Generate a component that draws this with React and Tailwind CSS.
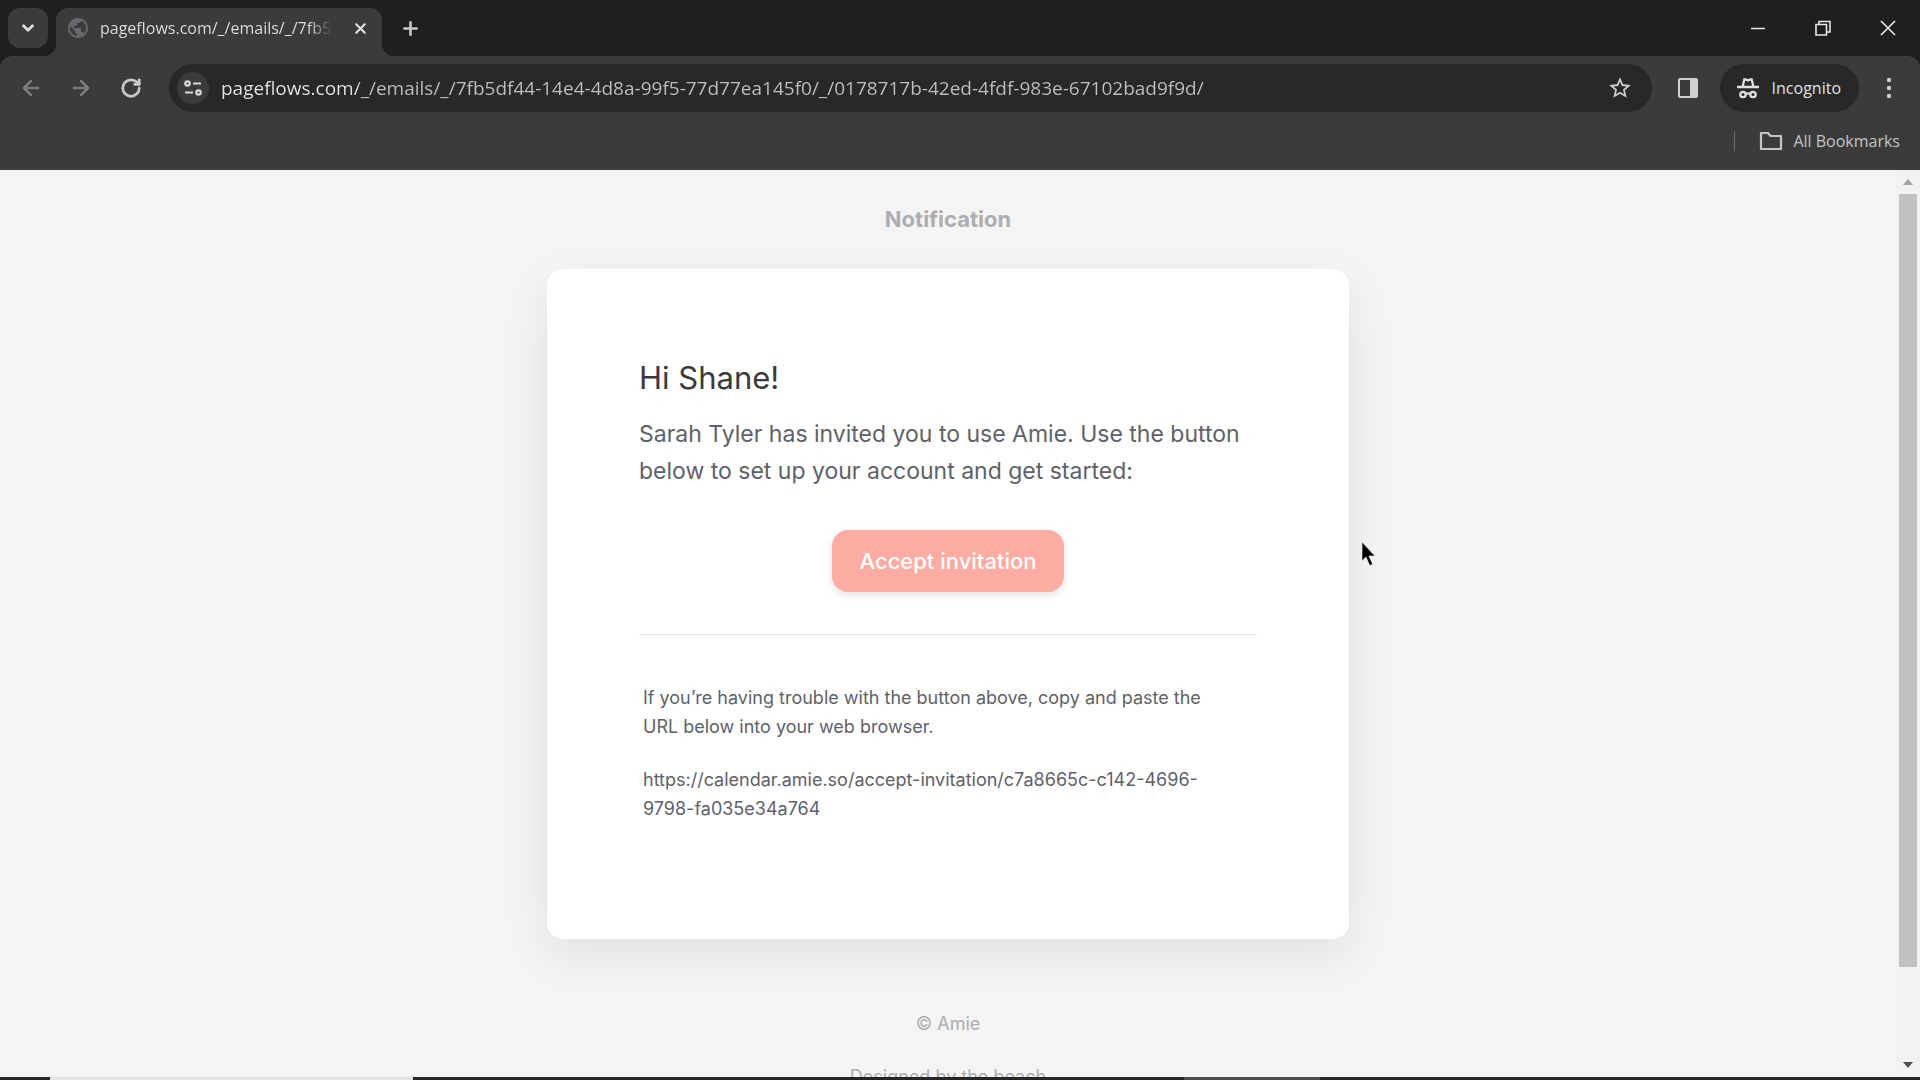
import { useState } from 'react';
import { ArrowLeft, ArrowRight, ChevronDown, Plus, RotateCw, X } from 'lucide-react';
import { MdPublic, MdStarBorder } from 'react-icons/md';

const PAGE_URL = 'pageflows.com/_/emails/_/7fb5df44-14e4-4d8a-99f5-77d77ea145f0/_/0178717b-42ed-4fdf-983e-67102bad9f9d/';
const INVITE_URL = 'https://calendar.amie.so/accept-invitation/c7a8665c-c142-4696-9798-fa035e34a764';

function TabStrip() {
  return (
    <div className="flex h-14 shrink-0 items-end bg-[#1f1f1f] pl-2">
      <button aria-label="Search tabs" className="mb-2 flex size-10 items-center justify-center rounded-xl bg-[#3b3b3b] text-[#e0e0e0]">
        <ChevronDown size={18} strokeWidth={3.5} />
      </button>
      <div className="relative ml-2 flex h-12 w-[326px] items-center rounded-t-xl bg-[#3b3b3b] pr-2 pl-[10px] text-[#e0e0e0]">
        <svg className="absolute bottom-0 -left-3" width="12" height="12" viewBox="0 0 12 12" fill="#3b3b3b"><path d="M12 0v12H0A12 12 0 0 0 12 0z" /></svg>
        <svg className="absolute -right-3 bottom-0" width="12" height="12" viewBox="0 0 12 12" fill="#3b3b3b"><path d="M0 0v12h12A12 12 0 0 1 0 0z" /></svg>
        <MdPublic size={24} className="mb-2 shrink-0 text-[#66686c]" />
        <span className="mb-2 ml-[10px] w-[232px] overflow-hidden bg-linear-to-r from-[#e0e0e0] from-90% to-transparent bg-clip-text text-base whitespace-nowrap text-transparent">
          {PAGE_URL}
        </span>
        <button aria-label="Close tab" className="mb-2 ml-4 flex size-6 items-center justify-center">
          <X size={17} strokeWidth={3} />
        </button>
      </div>
      <button aria-label="New tab" className="mb-4 ml-4 flex size-6 items-center justify-center text-[#c8c8c8]">
        <Plus size={21} strokeWidth={3} />
      </button>
      <div className="ml-auto flex h-14 items-center text-[#e8e8e8]">
        <button aria-label="Minimize" className="flex h-full w-[65px] items-center justify-center">
          <svg width="16" height="16" viewBox="0 0 16 16" stroke="currentColor" strokeWidth="1.5"><path d="M1 8.5h14" /></svg>
        </button>
        <button aria-label="Restore" className="flex h-full w-[65px] items-center justify-center">
          <svg width="16" height="16" viewBox="0 0 16 16" fill="none" stroke="currentColor" strokeWidth="1.6">
            <path d="M1 4.5h10.500V15H1zM4 4.500V1.500h11V12h-3" />
          </svg>
        </button>
        <button aria-label="Close" className="flex h-full w-[65px] items-center justify-center">
          <svg width="16" height="16" viewBox="0 0 16 16" stroke="currentColor" strokeWidth="1.6"><path d="M1 1l14 14M15 1L1 15" /></svg>
        </button>
      </div>
    </div>
  );
}

function Toolbar() {
  const [url, setUrl] = useState(PAGE_URL);

  return (
    <div className="flex shrink-0 items-center rounded-t-xl bg-[#3b3b3b] px-[15px] pt-2">
      <button aria-label="Back" className="flex size-8 items-center justify-center text-[#7b7b7b]"><ArrowLeft size={24} strokeWidth={2.5} /></button>
      <button aria-label="Forward" className="ml-[18px] flex size-8 items-center justify-center text-[#7b7b7b]"><ArrowRight size={24} strokeWidth={2.5} /></button>
      <button aria-label="Reload" className="ml-[18px] flex size-8 items-center justify-center text-[#c8c8c8]"><RotateCw size={22} strokeWidth={3} /></button>

      <div className="ml-[22px] flex h-12 flex-1 items-center rounded-full bg-[#282828] pr-4 pl-2">
        <button aria-label="Site information" className="flex size-8 shrink-0 items-center justify-center rounded-full bg-[#3b3b3b] text-[#d8d8d8]">
          <svg width="20" height="20" viewBox="0 0 20 20" fill="none" stroke="currentColor" strokeWidth="2.200">
            <circle cx="4.500" cy="5.500" r="2.200" />
            <path d="M10 5.500h8M2 14.500h8" />
            <circle cx="15.500" cy="14.500" r="2.200" />
          </svg>
        </button>
        <input
          aria-label="Address"
          value={url}
          onChange={e => setUrl(e.target.value)}
          className="ml-3 h-8 min-w-0 flex-1 bg-linear-to-r from-[#e6e6e6] from-[137px] to-[#c0c0c0] to-[137px] bg-clip-text text-[19px] text-transparent outline-none"
        />
        <button aria-label="Bookmark this tab" className="flex size-8 items-center justify-center text-[#cfcfcf]"><MdStarBorder size={26} /></button>
      </div>

      <button aria-label="Side panel" className="ml-5 flex size-8 items-center justify-center text-[#cfcfcf]">
        <svg width="22" height="22" viewBox="0 0 22 22"><rect x="2" y="2" width="18" height="18" rx="1" fill="none" stroke="currentColor" strokeWidth="2" /><path d="M13 2h7v18h-7z" fill="currentColor" /></svg>
      </button>
      <button className="ml-4 flex h-12 items-center gap-3 rounded-full bg-[#282828] pr-[18px] pl-4 text-base text-[#e0e0e0]">
        <svg width="24" height="24" viewBox="0 0 24 24" fill="none" stroke="currentColor" strokeWidth="2.300">
          <path d="M1 11h22M6.500 11l1.800-7.500h1.500l2.200 1 2.200-1h1.500l1.800 7.500" />
          <circle cx="7" cy="18.500" r="2.700" />
          <circle cx="17" cy="18.500" r="2.700" />
          <path d="M9.500 18q2.500-1.200 5 0" />
        </svg>
        Incognito
      </button>
      <button aria-label="Menu" className="ml-[14px] flex size-8 items-center justify-center text-[#cfcfcf]">
        <svg width="6" height="22" viewBox="0 0 6 22" fill="currentColor"><circle cx="3" cy="3" r="2.200" /><circle cx="3" cy="11" r="2.200" /><circle cx="3" cy="19" r="2.200" /></svg>
      </button>
    </div>
  );
}

function BookmarksBar() {
  return (
    <div className="flex h-[58px] shrink-0 items-center justify-end bg-[#3b3b3b] pr-5 text-base text-[#c4c4c4]">
      <span className="mr-6 h-5 w-px bg-[#6a6a6a]" />
      <button className="flex items-center gap-[10px]">
        <svg width="24" height="20" viewBox="0 0 24 20" fill="none" stroke="currentColor" strokeWidth="2.200" strokeLinejoin="round"><path d="M2 2h7l2.500 3H22v13H2z" /></svg>
        All Bookmarks
      </button>
    </div>
  );
}

function Email() {
  return (
    <div className="flex min-w-0 flex-1 flex-col items-center overflow-hidden font-['Inter',sans-serif] text-[#aeaeb0]">
      <h1 className="mt-[31px] text-[22px] leading-9 font-bold">Notification</h1>
      <article className="mt-8 w-full max-w-[802px] shrink-0 rounded-2xl bg-white px-[92px] pt-[85px] pb-[116px] text-[#5f6168] shadow-[0_16px_48px_rgba(0,0,0,0.08)]">
        <h2 className="text-[31px] leading-12 text-[#3a3a3c]">Hi Shane!</h2>
        <p className="mt-[14px] text-[23px] leading-[37px]">
          Sarah Tyler has invited you to use Amie. Use the button below to set up your account and get started:
        </p>
        <div className="mt-10 flex justify-center">
          <a href={INVITE_URL} className="rounded-2xl bg-[#fdaca4] px-7 py-[13px] text-[22px] leading-9 font-medium text-white shadow-[0_3px_8px_rgba(0,0,0,0.12)]">
            Accept invitation
          </a>
        </div>
        <hr className="mt-[42px] border-[#e6e6e8]" />
        <div className="mt-12 pr-10 pl-1 text-lg leading-[29px]">
          <p>If you’re having trouble with the button above, copy and paste the URL below into your web browser.</p>
          <p className="mt-6">{INVITE_URL}</p>
        </div>
      </article>
      <footer className="mt-[70px] text-center text-lg leading-[29px]">
        <p>© Amie</p>
        <p className="mt-6">Designed by the beach</p>
      </footer>
    </div>
  );
}

function Scrollbar() {
  return (
    <div className="flex w-6 shrink-0 flex-col items-center bg-[#f2f2f2]">
      <svg className="my-2 shrink-0" width="10" height="8" viewBox="0 0 10 8" fill="#a3a3a3"><path d="M5 1l5 6H0z" /></svg>
      <div className="h-[773px] w-[18px] bg-[#c1c1c1]" />
      <svg className="mt-auto mb-2 shrink-0" width="10" height="8" viewBox="0 0 10 8" fill="#505050"><path d="M0 1h10L5 7z" /></svg>
    </div>
  );
}

// Only the top edge of the taskbar is in view
function TaskbarEdge() {
  return (
    <div className="flex h-[3px] shrink-0 bg-[#252525]">
      <span className="ml-[50px] w-[363px] bg-[#e4e2e2]" />
      <span className="ml-[771px] w-[136px] bg-[#4d4d4d]" />
    </div>
  );
}

export default function App() {
  return (
    <div className="relative flex h-screen flex-col overflow-hidden bg-[#1f1f1f] font-['Open_Sans','Noto_Sans',sans-serif]">
      <TabStrip />
      <Toolbar />
      <BookmarksBar />
      <main className="flex min-h-0 flex-1 bg-[#f4f4f4]">
        <Email />
        <Scrollbar />
      </main>
      <TaskbarEdge />
      <svg className="absolute top-[541px] left-[1361px]" width="15" height="26" viewBox="0 0 15 26" fill="#000" stroke="#fff" strokeWidth="0.600">
        <path d="M1 1v19l4-4 3.700 8.500 3-1.300L8 15h6z" />
      </svg>
    </div>
  );
}
